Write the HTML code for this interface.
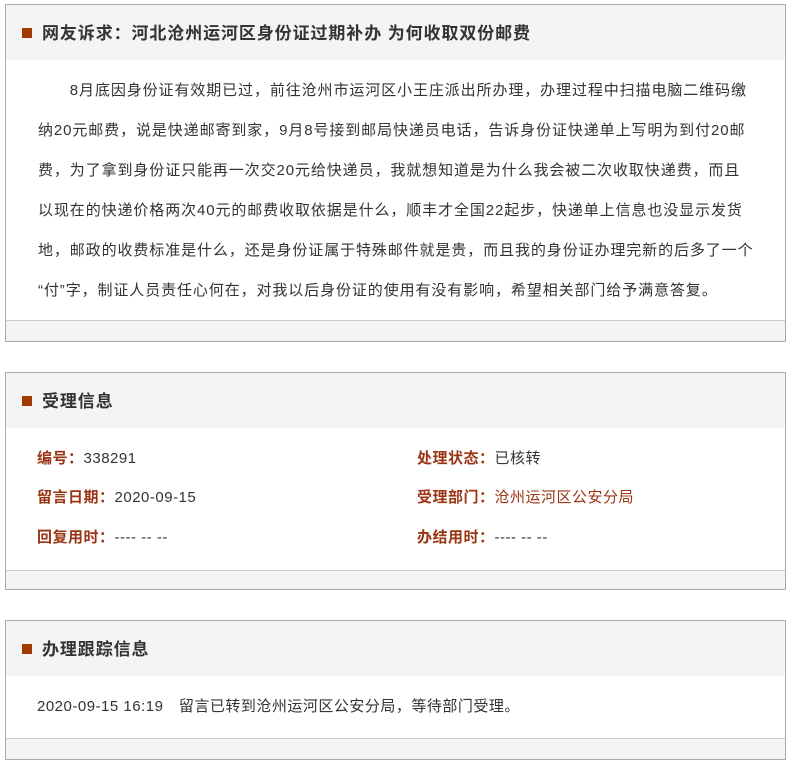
<!DOCTYPE html>
<html><head><meta charset="utf-8"><style>
body{margin:0;background:#fff;font-family:"Liberation Sans","Noto Sans CJK SC",sans-serif;color:#333;width:792px;height:745px;position:relative;overflow:hidden}
.box{position:absolute;left:5px;width:781px;border:1px solid #aaa;background:#f4f4f4;box-sizing:border-box}
.hd{position:absolute;left:0;right:0;top:0;border-bottom:1px solid #ccc;background:#f4f4f4}
.hd i{position:absolute;left:16px;width:10px;height:10px;background:#a33a00}
.hd b{position:absolute;left:36px;font-size:17px;color:#333;white-space:nowrap;letter-spacing:0.9px}
.bd{position:absolute;left:0;right:0;background:#fff;border-bottom:1px solid #ccc}
.t{position:absolute;font-size:15px;white-space:nowrap;line-height:20px;letter-spacing:0.5px}
.l{color:#9a3412;font-weight:bold}
.r{color:#9a3412}
</style></head><body>
<div class="box" style="top:4px;height:338px">
 <div class="hd" style="height:55px"><i style="top:23px"></i><b style="top:14px">网友诉求：河北沧州运河区身份证过期补办 为何收取双份邮费</b></div>
 <div class="bd" style="top:55px;height:260px">
  <div class="t" style="left:32px;top:11px;line-height:40px;letter-spacing:0.9px">&emsp;&emsp;8月底因身份证有效期已过，前往沧州市运河区小王庄派出所办理，办理过程中扫描电脑二维码缴<br>纳20元邮费，说是快递邮寄到家，9月8号接到邮局快递员电话，告诉身份证快递单上写明为到付20邮<br>费，为了拿到身份证只能再一次交20元给快递员，我就想知道是为什么我会被二次收取快递费，而且<br>以现在的快递价格两次40元的邮费收取依据是什么，顺丰才全国22起步，快递单上信息也没显示发货<br>地，邮政的收费标准是什么，还是身份证属于特殊邮件就是贵，而且我的身份证办理完新的后多了一个<br>“付”字，制证人员责任心何在，对我以后身份证的使用有没有影响，希望相关部门给予满意答复。</div>
 </div>
</div>
<div class="box" style="top:372px;height:218px">
 <div class="hd" style="height:55px"><i style="top:23px"></i><b style="top:14px">受理信息</b></div>
 <div class="bd" style="top:55px;height:142px">
  <div class="t" style="left:31px;top:21px"><span class="l">编号：</span>338291</div>
  <div class="t" style="left:31px;top:60px"><span class="l">留言日期：</span>2020-09-15</div>
  <div class="t" style="left:31px;top:100px"><span class="l">回复用时：</span>---- -- --</div>
  <div class="t" style="left:411px;top:21px"><span class="l">处理状态：</span>已核转</div>
  <div class="t" style="left:411px;top:60px"><span class="l">受理部门：</span><span class="r">沧州运河区公安分局</span></div>
  <div class="t" style="left:411px;top:100px"><span class="l">办结用时：</span>---- -- --</div>
 </div>
</div>
<div class="box" style="top:620px;height:140px">
 <div class="hd" style="height:55px"><i style="top:23px"></i><b style="top:14px">办理跟踪信息</b></div>
 <div class="bd" style="top:55px;height:62px">
  <div class="t" style="left:31px;top:21px">2020-09-15 16:19&emsp;留言已转到沧州运河区公安分局，等待部门受理。</div>
 </div>
</div>
</body></html>
